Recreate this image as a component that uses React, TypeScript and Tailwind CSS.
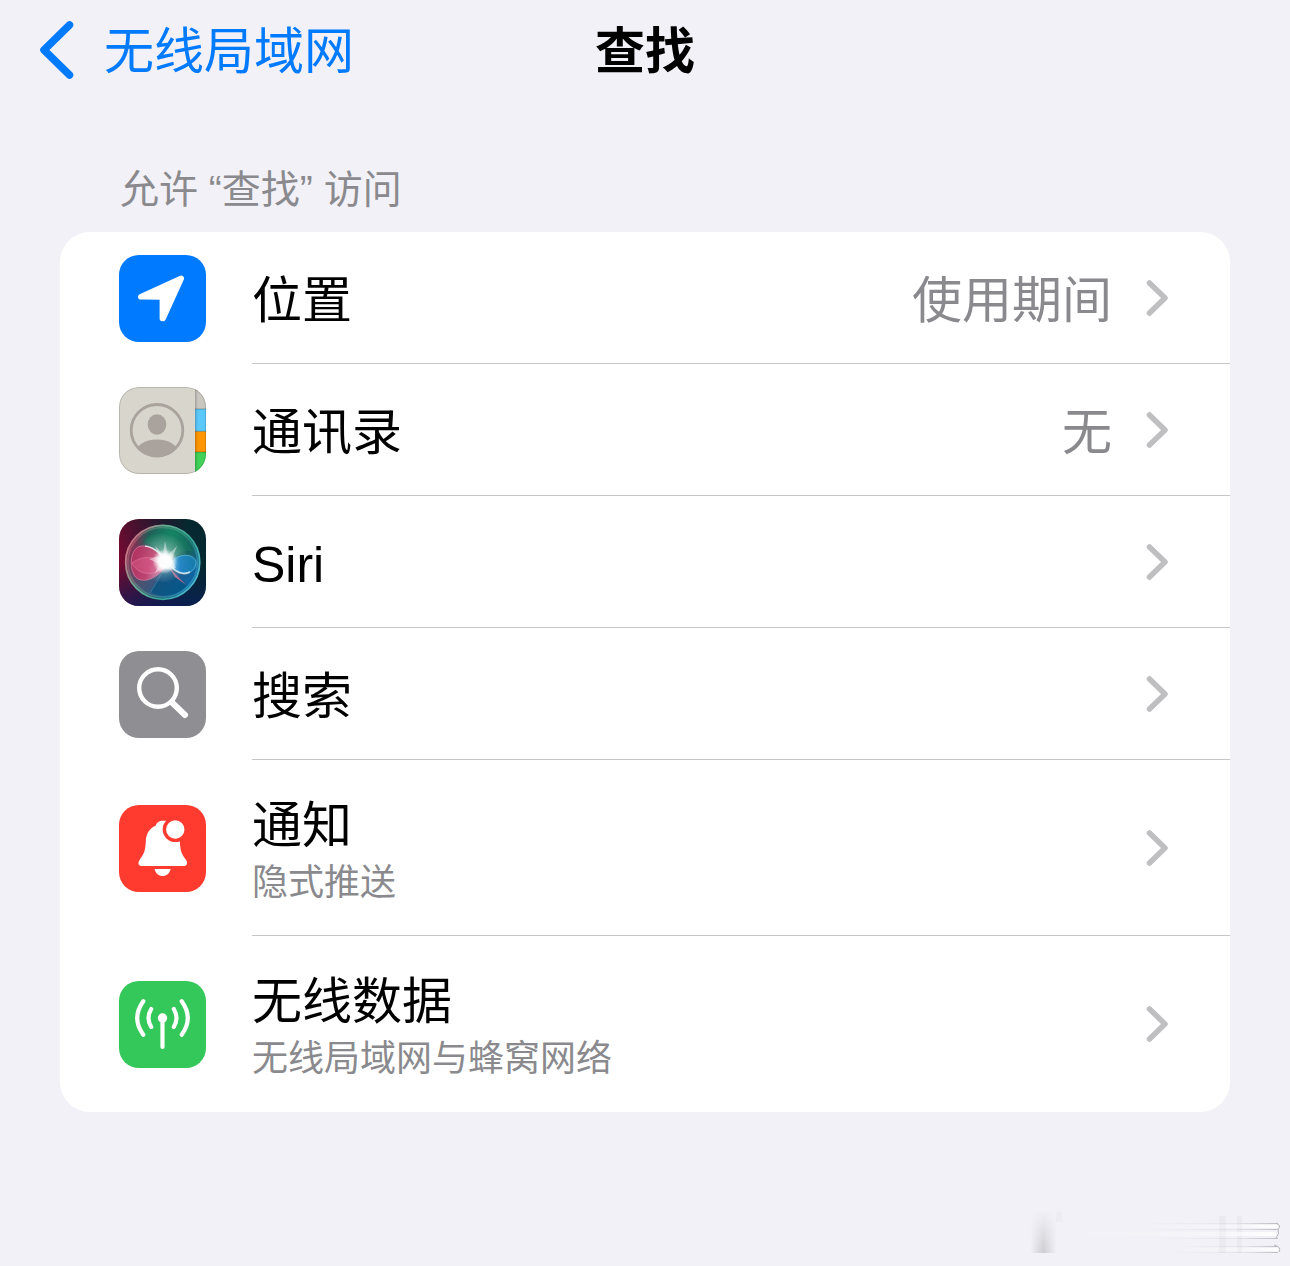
import React from 'react';

interface SettingRow {
  id: string;
  title: string;
  subtitle?: string;
  value?: string;
  icon: React.ReactNode;
}

const LocationIcon = () => (
  <svg viewBox="0 0 87 87" className="size-full" aria-hidden="true">
    <rect width="87" height="87" fill="#007aff" />
    <path
      d="M21.8 41.8 L62.3 23.3 L44 63.5 L43.4 63.5 L43.4 42 Z"
      fill="#fff"
      stroke="#fff"
      strokeWidth="5.6"
      strokeLinejoin="round"
    />
  </svg>
);

const ContactsIcon = () => (
  <svg viewBox="0 0 87 87" className="size-full" aria-hidden="true">
    <defs>
      <clipPath id="contact-clip">
        <circle cx="38" cy="43.3" r="26" />
      </clipPath>
      <linearGradient id="contact-fold" x1="0" x2="1" y1="0" y2="0">
        <stop offset="0" stopColor="#000" stopOpacity="0.2" />
        <stop offset="1" stopColor="#000" stopOpacity="0" />
      </linearGradient>
    </defs>
    <rect width="87" height="87" fill="#d7d5cc" />
    <rect x="76" width="11" height="22" fill="#c9c7c0" />
    <rect x="76" y="22" width="11" height="22.5" fill="#5ac8fa" />
    <rect x="76" y="44.5" width="11" height="20.5" fill="#ff9500" />
    <rect x="76" y="65" width="11" height="22" fill="#41d158" />
    <path d="M76 22 H87 M76 44.3 H87 M76 65 H87" stroke="#000" strokeOpacity="0.25" strokeWidth="1" />
    <rect x="76" width="3" height="87" fill="url(#contact-fold)" />
    <g clipPath="url(#contact-clip)" fill="#aaa29c">
      <ellipse cx="38" cy="67" rx="22" ry="14.5" />
    </g>
    <ellipse cx="38" cy="37.5" rx="9.3" ry="10.3" fill="#aaa29c" />
    <circle cx="38" cy="43.3" r="25.8" fill="none" stroke="#aaa29c" strokeWidth="2.8" />
    <rect x="0.5" y="0.5" width="86" height="86" rx="19.5" fill="none" stroke="#000" strokeOpacity="0.15" />
  </svg>
);

const SiriIcon = () => (
  <svg viewBox="0 0 87 87" className="size-full" aria-hidden="true">
    <defs>
      <linearGradient id="siri-bg" x1="0" x2="1" y1="0" y2="0">
        <stop offset="0" stopColor="#7a0a30" />
        <stop offset="0.45" stopColor="#2f1734" />
        <stop offset="0.8" stopColor="#062c33" />
        <stop offset="1" stopColor="#05292f" />
      </linearGradient>
      <linearGradient id="siri-shade" x1="0" x2="0" y1="0" y2="1">
        <stop offset="0" stopColor="#041a1c" stopOpacity="0.25" />
        <stop offset="0.5" stopColor="#0b1746" stopOpacity="0" />
        <stop offset="1" stopColor="#0a1c5c" stopOpacity="0.75" />
      </linearGradient>
      <linearGradient id="siri-orb" x1="0" x2="0.85" y1="0.35" y2="0.9">
        <stop offset="0" stopColor="#8a2f50" />
        <stop offset="0.4" stopColor="#4b5270" />
        <stop offset="1" stopColor="#0765a5" />
      </linearGradient>
      <radialGradient id="siri-green" cx="0.62" cy="0.14" r="0.52">
        <stop offset="0" stopColor="#148a66" />
        <stop offset="0.6" stopColor="#0f6656" stopOpacity="0.8" />
        <stop offset="1" stopColor="#0b604f" stopOpacity="0" />
      </radialGradient>
      <linearGradient id="siri-ring" x1="0" x2="1" y1="0.2" y2="0.7">
        <stop offset="0" stopColor="#e06582" />
        <stop offset="0.35" stopColor="#6aae93" />
        <stop offset="0.7" stopColor="#35a795" />
        <stop offset="1" stopColor="#4fb9d6" />
      </linearGradient>
      <linearGradient id="siri-pink" x1="0" x2="1" y1="0" y2="0.3">
        <stop offset="0" stopColor="#b8315f" />
        <stop offset="0.6" stopColor="#d83f72" />
        <stop offset="1" stopColor="#eba5c0" />
      </linearGradient>
      <linearGradient id="siri-blue" x1="0" x2="1" y1="0" y2="0">
        <stop offset="0" stopColor="#a5e7ff" />
        <stop offset="0.4" stopColor="#2389d0" />
        <stop offset="1" stopColor="#157fae" />
      </linearGradient>
      <radialGradient id="siri-haze">
        <stop offset="0" stopColor="#d9f6f0" stopOpacity="0.75" />
        <stop offset="0.5" stopColor="#cfeeea" stopOpacity="0.35" />
        <stop offset="1" stopColor="#cfeeea" stopOpacity="0" />
      </radialGradient>
      <radialGradient id="siri-core">
        <stop offset="0" stopColor="#fff" />
        <stop offset="0.5" stopColor="#fff" stopOpacity="0.95" />
        <stop offset="1" stopColor="#fff" stopOpacity="0" />
      </radialGradient>
      <filter id="siri-soft" x="-20%" y="-20%" width="140%" height="140%">
        <feGaussianBlur stdDeviation="0.6" />
      </filter>
    </defs>
    <rect width="87" height="87" fill="url(#siri-bg)" />
    <rect width="87" height="87" fill="url(#siri-shade)" />
    <circle cx="43.7" cy="43.3" r="36.5" fill="url(#siri-orb)" />
    <circle cx="43.7" cy="43.3" r="36.5" fill="url(#siri-green)" />
    <g filter="url(#siri-soft)">
      <path
        d="M28 18 C42 9 64 14 74 33 C67 29 58 35 50 41 C42 30 34 25 24 24Z"
        fill="#157a5c"
        fillOpacity="0.55"
      />
      <path d="M48 46 C43 54 37 62 31 73 C43 80 60 77 68 66 C61 60 54 52 48 46Z" fill="#05527f" fillOpacity="0.65" />
      <path d="M49 47 L67 66 L56 58Z" fill="#f07799" fillOpacity="0.7" />
      <circle cx="44" cy="39" r="25" fill="url(#siri-haze)" />
      <path
        d="M49 46 C40 33 31 26 22 27 C10 29 9 54 19 60 C31 65 41 54 49 46Z"
        fill="url(#siri-pink)"
        fillOpacity="0.8"
        stroke="#e98bab"
        strokeOpacity="0.6"
      />
      <path
        d="M48 45 C36 36 22 37 13 44 C19 57 37 58 48 46Z"
        fill="#e0628f"
        fillOpacity="0.4"
        stroke="#ee99bb"
        strokeOpacity="0.4"
      />
      <path
        d="M50 45 C58 35 72 33 77 42 C78 55 62 59 50 45Z"
        fill="url(#siri-blue)"
        fillOpacity="0.85"
        stroke="#62c9ea"
        strokeOpacity="0.7"
      />
      <path d="M48 46 L31 74" stroke="#73b4cf" strokeOpacity="0.4" strokeWidth="1" />
      <path
        d="M26 27 C36 28 43 36 50 45 C56 53 64 57 71 53"
        fill="none"
        stroke="#fff"
        strokeOpacity="0.75"
        strokeWidth="1.6"
      />
      <path
        d="M46 22 L49 36 L58 27 L53 40 L57 49 L51 51 L46 49 L36 54 L40 45 L30 40 L40 37 L36 27 L44 35Z"
        fill="#fff"
        fillOpacity="0.45"
      />
    </g>
    <circle cx="46" cy="42.5" r="12.5" fill="url(#siri-core)" />
    <circle cx="43.7" cy="43.3" r="37" fill="none" stroke="url(#siri-ring)" strokeWidth="1.8" />
    <circle cx="43.7" cy="43.3" r="34.8" fill="none" stroke="url(#siri-ring)" strokeOpacity="0.45" strokeWidth="1.6" />
  </svg>
);

const SearchIcon = () => (
  <svg viewBox="0 0 87 87" className="size-full" aria-hidden="true">
    <rect width="87" height="87" fill="#8e8e93" />
    <g fill="none" stroke="#fff" strokeLinecap="round">
      <circle cx="39" cy="37" r="18.8" strokeWidth="4.4" />
      <path d="M53 51.5 L66 64" strokeWidth="6" />
    </g>
  </svg>
);

const BellIcon = () => (
  <svg viewBox="0 0 87 87" className="size-full" aria-hidden="true">
    <rect width="87" height="87" fill="#ff3b30" />
    <path
      d="M43.5 15.7 C39.5 15.7 37.3 18.3 36.6 20.8 C30.5 23.2 27 29 26.8 36 C26.5 47 24.2 49.6 20.8 54.5 C18.2 58.5 19.6 61 23 61 H64.5 C68 61 69.2 58.3 66.8 54.5 C63 49.2 61 47 60.8 34 L50 15.7Z"
      fill="#fff"
    />
    <path d="M35.5 64 H51.7 C50.5 68.5 47.5 71 43.6 71 C39.7 71 36.7 68.5 35.5 64Z" fill="#fff" />
    <circle cx="56.3" cy="24.5" r="12.6" fill="#ff3b30" />
    <circle cx="56.3" cy="24.5" r="9.2" fill="#fff" />
  </svg>
);

const AntennaIcon = () => (
  <svg viewBox="0 0 87 87" className="size-full" aria-hidden="true">
    <rect width="87" height="87" fill="#34c759" />
    <circle cx="43.5" cy="37" r="4.7" fill="#fff" />
    <g fill="none" stroke="#fff" strokeWidth="4.2" strokeLinecap="round">
      <path d="M43.5 38 V66" />
      <path d="M32.2 28 Q26.8 37 32.2 46" />
      <path d="M54.8 28 Q60.2 37 54.8 46" />
      <path d="M24.3 20.3 Q12.1 37 24.3 53.7" />
      <path d="M62.7 20.3 Q74.9 37 62.7 53.7" />
    </g>
  </svg>
);

const rows: SettingRow[] = [
  { id: 'location', title: '位置', value: '使用期间', icon: <LocationIcon /> },
  { id: 'contacts', title: '通讯录', value: '无', icon: <ContactsIcon /> },
  { id: 'siri', title: 'Siri', icon: <SiriIcon /> },
  { id: 'search', title: '搜索', icon: <SearchIcon /> },
  { id: 'notifications', title: '通知', subtitle: '隐式推送', icon: <BellIcon /> },
  { id: 'data', title: '无线数据', subtitle: '无线局域网与蜂窝网络', icon: <AntennaIcon /> },
];

const Row: React.FC<{ row: SettingRow }> = ({ row }) => (
  <li className="group">
    <button
      type="button"
      className={`flex w-full items-center gap-[46px] pl-[59px] text-left ${row.subtitle ? 'h-44' : 'h-[132px]'}`}
    >
      <span className="size-[87px] shrink-0 overflow-hidden rounded-[20px]">{row.icon}</span>
      <span className="flex h-full min-w-0 flex-1 items-center border-b border-[#c6c6c8] pr-[62px] group-last:border-b-0">
        <span className="flex flex-1 flex-col pt-1.5">
          <span className="text-[50px] leading-[64px] text-black">{row.title}</span>
          {row.subtitle && <span className="text-[36px] leading-[50px] text-[#8a8a8e]">{row.subtitle}</span>}
        </span>
        {row.value && <span className="pt-1.5 text-[50px] leading-[64px] text-[#8a8a8e]">{row.value}</span>}
        <svg viewBox="0 0 22 36" className="ml-[34px] h-9 w-[22px] shrink-0" fill="none" aria-hidden="true">
          <path d="M3.5 3 L19 18 L3.5 33" stroke="#bfbfc1" strokeWidth="5.5" strokeLinecap="round" strokeLinejoin="round" />
        </svg>
      </span>
    </button>
  </li>
);

// Faint smeared mark in the bottom corner
const CornerMark = () => (
  <svg viewBox="0 0 260 50" className="absolute right-2 bottom-2 h-[50px] w-[260px]" aria-hidden="true">
    <defs>
      <linearGradient id="mark-col" x1="0" x2="1" y1="0" y2="0">
        <stop offset="0" stopColor="#cdcdd1" stopOpacity="0" />
        <stop offset="0.5" stopColor="#cdcdd1" />
        <stop offset="1" stopColor="#cdcdd1" stopOpacity="0" />
      </linearGradient>
      <linearGradient id="mark-fade" x1="0" x2="0" y1="0" y2="1">
        <stop offset="0" stopColor="#f2f1f7" />
        <stop offset="1" stopColor="#f2f1f7" stopOpacity="0" />
      </linearGradient>
      <linearGradient id="mark-light" x1="0" x2="1" y1="0" y2="0">
        <stop offset="0" stopColor="#fff" stopOpacity="0" />
        <stop offset="0.7" stopColor="#fff" stopOpacity="0.3" />
        <stop offset="1" stopColor="#fff" />
      </linearGradient>
      <linearGradient id="mark-dark" x1="0" x2="1" y1="0" y2="0">
        <stop offset="0" stopColor="#bdbdc2" stopOpacity="0" />
        <stop offset="0.7" stopColor="#bdbdc2" stopOpacity="0.25" />
        <stop offset="1" stopColor="#bdbdc2" />
      </linearGradient>
      <filter id="mark-soft" x="-5%" y="-10%" width="110%" height="120%">
        <feGaussianBlur stdDeviation="0.7" />
      </filter>
    </defs>
    <g filter="url(#mark-soft)">
      <rect x="8" y="3" width="27" height="42" fill="url(#mark-col)" />
      <rect x="8" y="2" width="27" height="43" fill="url(#mark-fade)" />
      <rect x="34" y="4" width="6" height="10" fill="#edecf2" />
      <rect x="197" y="8" width="7" height="37" fill="#ebeaf0" />
      <rect x="215" y="8" width="5" height="37" fill="#ebeaf0" />
      <rect x="50" y="24" width="204" height="4" fill="url(#mark-light)" />
      <rect x="120" y="15" width="136" height="1" fill="url(#mark-dark)" />
      <rect x="120" y="17" width="136" height="3" fill="url(#mark-light)" />
      <rect x="120" y="21" width="136" height="1" fill="url(#mark-dark)" />
      <rect x="120" y="30" width="136" height="1" fill="url(#mark-dark)" />
      <rect x="150" y="38" width="106" height="1" fill="url(#mark-dark)" />
      <rect x="150" y="40" width="106" height="3" fill="url(#mark-light)" />
      <rect x="150" y="44" width="106" height="1" fill="url(#mark-dark)" />
      <path d="M254 15 Q260 18 256 21 Q258 26 254 30 M252 37 Q260 39 257 44" fill="none" stroke="#b5b5ba" strokeWidth="1" />
    </g>
  </svg>
);

export default function App() {
  return (
    <div className="relative min-h-screen bg-[#f2f1f7] font-['Liberation_Sans','Noto_Sans_CJK_SC',sans-serif]">
      <header className="grid h-[100px] grid-cols-[1fr_auto_1fr] items-center px-10">
        <a href="#wlan" className="flex items-center gap-[30px] text-[50px] leading-[64px] text-[#007aff]">
          <svg viewBox="0 0 34 58" className="h-[58px] w-[34px] shrink-0" fill="none" aria-hidden="true">
            <path d="M29.5 4 L4 29 L29.5 54" stroke="currentColor" strokeWidth="7.5" strokeLinecap="round" strokeLinejoin="round" />
          </svg>
          <span className="pt-1">无线局域网</span>
        </a>
        <h1 className="pt-1 text-[50px] leading-[64px] font-bold text-black">查找</h1>
      </header>

      <main className="px-[60px] pt-16">
        <h2 className="pb-4 pl-[60px] text-[39px] leading-[52px] text-[#8a8a8e]">允许 “查找” 访问</h2>
        <ul className="overflow-hidden rounded-[30px] bg-white">
          {rows.map((row) => (
            <Row key={row.id} row={row} />
          ))}
        </ul>
      </main>

      <CornerMark />
    </div>
  );
}
